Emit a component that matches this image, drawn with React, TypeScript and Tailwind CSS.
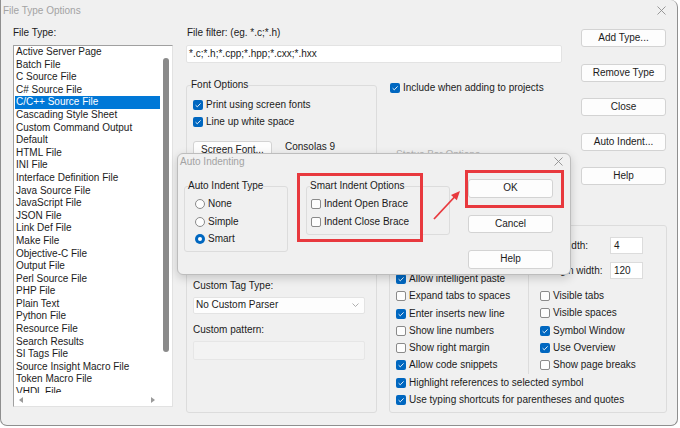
import React from "react";

const fileTypes = [
  "Active Server Page",
  "Batch File",
  "C Source File",
  "C# Source File",
  "C/C++ Source File",
  "Cascading Style Sheet",
  "Custom Command Output",
  "Default",
  "HTML File",
  "INI File",
  "Interface Definition File",
  "Java Source File",
  "JavaScript File",
  "JSON File",
  "Link Def File",
  "Make File",
  "Objective-C File",
  "Output File",
  "Perl Source File",
  "PHP File",
  "Plain Text",
  "Python File",
  "Resource File",
  "Search Results",
  "SI Tags File",
  "Source Insight Macro File",
  "Token Macro File",
  "VHDL File",
  "XML File",
];

const Check = ({ checked }: { checked?: boolean }) => (
  <span
    className={
      checked
        ? "flex h-[10px] w-[10px] shrink-0 items-center justify-center rounded-[2px] bg-[#0067c0]"
        : "h-[10px] w-[10px] shrink-0 rounded-[2px] border border-[#8a8a8a] bg-[#fdfdfd]"
    }
  >
    {checked && (
      <svg viewBox="0 0 10 10" className="h-[10px] w-[10px]">
        <path d="M2.6 5.2 L4.3 6.8 L7.6 3.4" fill="none" stroke="#ffffff" strokeWidth="0.9" />
      </svg>
    )}
  </span>
);

const CheckRow = ({ label, checked }: { label: string; checked?: boolean }) => (
  <div className="flex h-[17.25px] items-center gap-[3px] whitespace-nowrap">
    <Check checked={checked} />
    <span>{label}</span>
  </div>
);

const Radio = ({ label, checked }: { label: string; checked?: boolean }) => (
  <div className="flex h-[17.5px] items-center gap-[3px] whitespace-nowrap">
    {checked ? (
      <span className="flex h-[10px] w-[10px] items-center justify-center rounded-full bg-[#0067c0]">
        <span className="h-[4px] w-[4px] rounded-full bg-white" />
      </span>
    ) : (
      <span className="h-[10px] w-[10px] rounded-full border border-[#8a8a8a] bg-[#fdfdfd]" />
    )}
    <span>{label}</span>
  </div>
);

const Btn = ({ children, className = "" }: { children: React.ReactNode; className?: string }) => (
  <div
    className={
      "flex items-center justify-center rounded-[3px] border border-[#d3d3d3] bg-[#fdfdfd] text-[#1b1b1b] " +
      className
    }
  >
    {children}
  </div>
);

const CloseX = () => (
  <svg viewBox="0 0 9 9" className="h-[9px] w-[9px]">
    <path d="M0.5 0.5 L8.5 8.5 M8.5 0.5 L0.5 8.5" stroke="#8d8d8d" strokeWidth="0.9" />
  </svg>
);

const App: React.FC = () => {
  return (
    <div className="relative h-[428px] w-[680px] overflow-hidden bg-white font-['Liberation_Sans',Arial,sans-serif] text-[10px] leading-[12px] text-[#1b1b1b]">
      {/* Main window */}
      <div className="h-[426px] w-[678px] overflow-hidden rounded-b-[7px] rounded-tr-[7px] border-x border-b border-[#8f8f8f] bg-[#f0f0f0]">
        {/* Title bar */}
        <div className="flex h-[21px] items-center justify-between pl-[2px] pr-[11px]">
          <span className="text-[#a3a3a3]">File Type Options</span>
          <CloseX />
        </div>

        {/* Body */}
        <div className="flex pl-[12px] pt-[6px]">
          {/* File type list */}
          <div className="flex w-[160px] flex-col">
            <div className="h-[12px]">File Type:</div>
            <div className="mt-[6px] flex h-[362px] flex-col border-l border-t border-[#a0a0a0] border-r-[#e2e2e2] border-b-[#e2e2e2] border-r border-b bg-white">
              <div className="flex h-[347px]">
                <div className="w-[146px] overflow-hidden pl-[1px]">
                  {fileTypes.map((t) => (
                    <div
                      key={t}
                      className={
                        t === "C/C++ Source File"
                          ? "h-[12.6px] whitespace-nowrap bg-[#0078d7] pl-[1px] leading-[12.6px] text-white"
                          : "h-[12.6px] whitespace-nowrap pl-[1px] leading-[12.6px]"
                      }
                    >
                      {t}
                    </div>
                  ))}
                </div>
                <div className="flex-1 pt-[12px]">
                  <div className="ml-[3px] h-[294px] w-[6px] rounded-full bg-[#8a8a8a]" />
                </div>
              </div>
              <div className="flex h-[13px] items-center justify-between pl-[5px] pr-[17px]">
                <svg viewBox="0 0 4 6" className="h-[6px] w-[4px]">
                  <path d="M4 0 L0 3 L4 6 Z" fill="#9a9a9a" />
                </svg>
                <svg viewBox="0 0 4 6" className="h-[6px] w-[4px]">
                  <path d="M0 0 L4 3 L0 6 Z" fill="#9a9a9a" />
                </svg>
              </div>
            </div>
          </div>

          {/* Right area */}
          <div className="ml-[13px] grid grid-cols-[191px_173px_93px] grid-rows-[52px_140px_194px] gap-x-[12px]">
            {/* File filter */}
            <div className="col-span-2 flex flex-col">
              <div className="h-[12px] pl-[1px]">File filter: (eg. *.c;*.h)</div>
              <div className="mt-[6px] flex h-[18px] items-center rounded-[2px] border border-[#e3e3e3] bg-white pl-[2px]">
                *.c;*.h;*.cpp;*.hpp;*.cxx;*.hxx
              </div>
            </div>

            {/* Buttons */}
            <div className="row-span-2 flex flex-col gap-[16.5px] pl-[7px] pt-[2px]">
              <Btn className="h-[18px] w-[85px]">Add Type...</Btn>
              <Btn className="h-[18px] w-[85px]">Remove Type</Btn>
              <Btn className="h-[18px] w-[85px]">Close</Btn>
              <Btn className="h-[18px] w-[85px]">Auto Indent...</Btn>
              <Btn className="h-[18px] w-[85px]">Help</Btn>
            </div>

            {/* Font options */}
            <fieldset className="row-span-2 h-[334px] rounded-[3px] border border-[#dcdcdc]">
              <legend className="ml-[4px] leading-[12px]">Font Options</legend>
              <div className="flex flex-col pl-[6px] pt-[5.5px]">
                <CheckRow label="Print using screen fonts" checked />
                <CheckRow label="Line up white space" checked />
                <div className="mt-[9.5px] flex items-start">
                  <Btn className="h-[19px] w-[79px]">Screen Font...</Btn>
                  <span className="ml-[13px]">Consolas 9</span>
                </div>
                <div className="mt-[120px] h-[12px]">Custom Tag Type:</div>
                <div className="mt-[5px] flex h-[17px] w-[172px] items-center justify-between rounded-[2px] border border-[#e3e3e3] bg-[#fdfdfd] pl-[2px] pr-[5px]">
                  <span>No Custom Parser</span>
                  <svg viewBox="0 0 7 4" className="h-[4px] w-[7px]">
                    <path d="M0.5 0.5 L3.5 3.5 L6.5 0.5" fill="none" stroke="#9a9a9a" strokeWidth="0.8" />
                  </svg>
                </div>
                <div className="mt-[10px] h-[12px]">Custom pattern:</div>
                <div className="mt-[5px] h-[19px] w-[172px] rounded-[2px] border border-[#e6e6e6] bg-[#f3f3f3]" />
              </div>
            </fieldset>

            {/* Include / status bar */}
            <div className="flex flex-col pl-[1px]">
              <div className="flex h-[17px] items-center gap-[3px] whitespace-nowrap">
                <Check checked />
                <span>Include when adding to projects</span>
              </div>
              <fieldset className="mt-[53px] h-[64px] rounded-[3px] border border-[#dcdcdc]">
                <legend className="ml-[5px] leading-[12px] text-[#b4b4b4]">Status Bar Options</legend>
              </fieldset>
            </div>

            {/* Editing options */}
            <fieldset className="col-span-2 h-[194px] rounded-[3px] border border-[#dcdcdc]">
              <legend className="ml-[4px] leading-[12px]">Editing Options</legend>
              <div className="grid grid-cols-[138px_1fr]">
                <div className="flex flex-col pl-[6px] pt-[39.4px]">
                  <CheckRow label="Allow intelligent paste" checked />
                  <CheckRow label="Expand tabs to spaces" />
                  <CheckRow label="Enter inserts new line" checked />
                  <CheckRow label="Show line numbers" />
                  <CheckRow label="Show right margin" />
                  <CheckRow label="Allow code snippets" checked />
                </div>
                <div className="flex flex-col border-l border-[#dcdcdc] pl-[11px]">
                  <div className="mt-[6px] flex h-[17px] items-center">
                    <span className="ml-[3px] w-[67px] whitespace-nowrap">Tab width:</span>
                    <div className="flex h-[17px] w-[33px] items-center border border-[#dcdcdc] bg-white pl-[3px]">4</div>
                  </div>
                  <div className="mt-[8px] flex h-[17px] items-center">
                    <span className="ml-[3px] w-[67px] whitespace-nowrap">Margin width:</span>
                    <div className="flex h-[17px] w-[33px] items-center border border-[#dcdcdc] bg-white pl-[3px]">120</div>
                  </div>
                  <div className="mt-[8.6px] flex flex-col">
                    <CheckRow label="Visible tabs" />
                    <CheckRow label="Visible spaces" />
                    <CheckRow label="Symbol Window" checked />
                    <CheckRow label="Use Overview" checked />
                    <CheckRow label="Show page breaks" />
                  </div>
                </div>
              </div>
              <div className="flex flex-col pl-[6px]">
                <CheckRow label="Highlight references to selected symbol" checked />
                <CheckRow label="Use typing shortcuts for parentheses and quotes" checked />
              </div>
            </fieldset>
          </div>
        </div>
      </div>

      {/* Auto Indenting dialog */}
      <div className="absolute left-[177px] top-[153px] flex h-[122px] w-[394px] flex-col rounded-[6px] border border-[#bdbdbd] bg-[#f0f0f0] shadow-[0_3px_10px_rgba(0,0,0,0.18)]">
        <div className="flex h-[15px] items-center justify-between pl-[2px] pr-[7px]">
          <span className="text-[#a3a3a3]">Auto Indenting</span>
          <CloseX />
        </div>
        <div className="flex items-start pl-[6px]">
          <fieldset className="mt-[11px] h-[72px] w-[104px] rounded-[3px] border border-[#dcdcdc]">
            <legend className="ml-[3px] leading-[12px]">Auto Indent Type</legend>
            <div className="flex flex-col pl-[10px] pt-[3.25px]">
              <Radio label="None" />
              <Radio label="Simple" />
              <Radio label="Smart" checked />
            </div>
          </fieldset>
          <fieldset className="ml-[18px] mt-[11px] h-[55px] w-[144px] rounded-[3px] border border-[#dcdcdc]">
            <legend className="ml-[3px] whitespace-nowrap leading-[12px]">Smart Indent Options</legend>
            <div className="flex flex-col pl-[4px] pt-[3.25px]">
              <div className="flex h-[17.5px] items-center gap-[3px] whitespace-nowrap">
                <Check />
                <span>Indent Open Brace</span>
              </div>
              <div className="flex h-[17.5px] items-center gap-[3px] whitespace-nowrap">
                <Check />
                <span>Indent Close Brace</span>
              </div>
            </div>
          </fieldset>
          <div className="ml-[18px] mt-[10px] flex flex-col gap-[17px]">
            <Btn className="h-[18.5px] w-[85px]">OK</Btn>
            <Btn className="h-[18.5px] w-[85px]">Cancel</Btn>
            <Btn className="h-[18.5px] w-[85px]">Help</Btn>
          </div>
        </div>
      </div>

      {/* Red annotations */}
      <div className="absolute left-[297px] top-[173px] h-[69px] w-[126px] border-[3px] border-[#e8393e]" />
      <div className="absolute left-[465px] top-[170px] h-[38px] w-[99px] border-[3px] border-[#e8393e]" />
      <svg className="absolute left-[428px] top-[186px] h-[38px] w-[36px]" viewBox="0 0 36 38">
        <path d="M6 33 L26.5 11" stroke="#e8393e" strokeWidth="1.8" fill="none" />
        <path d="M32 5 L28.8 14.3 L23 8.9 Z" fill="#e8393e" />
      </svg>
    </div>
  );
};

export default App;
